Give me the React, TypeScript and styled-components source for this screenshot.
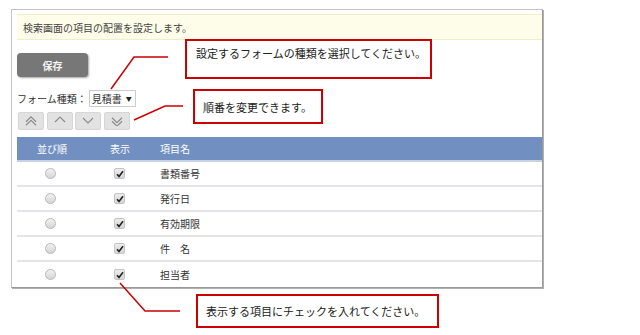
import React from 'react'
import styled, { createGlobalStyle } from 'styled-components'

const GlobalStyle = createGlobalStyle`
  html, body {
    margin: 0;
    padding: 0;
    background: #ffffff;
  }
  body {
    font-family: "Noto Sans CJK JP", "Noto Sans", sans-serif;
    color: #333333;
  }
`

const rows = [
  { name: '書類番号' },
  { name: '発行日' },
  { name: '有効期限' },
  { name: '件\u3000名' },
  { name: '担当者' },
]

const Page = styled.div`
  position: relative;
  width: 640px;
  height: 335px;
  padding: 9px 0 0 11px;
  box-sizing: border-box;
  overflow: hidden;
`

const Frame = styled.div`
  width: 532px;
  box-sizing: border-box;
  border: 1px solid #c4c4c4;
  border-right-color: #9a9a9a;
  border-bottom-color: #9a9a9a;
  box-shadow: 1px 1px 0 #b0b0b0;
  padding: 4px 0 0 5px;
  display: flex;
  flex-direction: column;
  align-items: flex-start;
`

const Notice = styled.div`
  align-self: stretch;
  height: 26px;
  box-sizing: border-box;
  background: #fefde9;
  border-top: 1px solid #f2eecb;
  border-bottom: 1px solid #f2eecb;
  padding-left: 6px;
  display: flex;
  align-items: center;
  font-size: 10px;
  color: #444;
`

const SaveButton = styled.div`
  margin-top: 13px;
  width: 71px;
  height: 24px;
  border-radius: 4px;
  background: #777777;
  box-shadow: 1px 1px 2px rgba(0, 0, 0, 0.35);
  color: #f4f4f4;
  font-size: 10px;
  font-weight: bold;
  display: flex;
  align-items: center;
  justify-content: center;
`

const FormRow = styled.div`
  margin-top: 13px;
  height: 17px;
  display: flex;
  align-items: center;
  font-size: 10px;
`

const Select = styled.div`
  margin-left: 2px;
  width: 47px;
  height: 17px;
  box-sizing: border-box;
  border: 1px solid #cccccc;
  background: #fff;
  display: flex;
  align-items: center;
  padding-left: 2px;
  gap: 4px;
  font-size: 10px;
`

const Caret = styled.span`
  font-size: 6px;
  color: #222;
`

const OrderBar = styled.div`
  margin-top: 5px;
  margin-left: 1px;
  display: flex;
  gap: 2.5px;
`

const OrderButton = styled.div`
  width: 26px;
  height: 18px;
  box-sizing: border-box;
  border-radius: 2px;
  background: #e2e2e2;
  border: 1px solid #d6d6d6;
  display: flex;
  align-items: center;
  justify-content: center;
`

const Table = styled.div`
  margin-top: 7px;
  align-self: stretch;
  display: flex;
  flex-direction: column;
`

const HeadRow = styled.div`
  display: grid;
  grid-template-columns: 70px 66px 1fr;
  height: 25px;
  box-sizing: border-box;
  background: #7190c1;
  border-bottom: 2px solid #c9d2e3;
  color: #ffffff;
  font-size: 10px;
  align-items: center;
`

const BodyRow = styled.div<{ $last?: boolean }>`
  display: grid;
  grid-template-columns: 70px 66px 1fr;
  height: 25px;
  box-sizing: border-box;
  border-bottom: ${(p) => (p.$last ? 'none' : '2px solid #e4e4ec')};
  font-size: 10px;
  align-items: center;
`

const Cell = styled.div<{ $center?: boolean }>`
  display: flex;
  justify-content: ${(p) => (p.$center ? 'center' : 'flex-start')};
  padding-left: ${(p) => (p.$center ? '0' : '7px')};
`

const Radio = styled.span`
  width: 11px;
  height: 11px;
  margin-right: 4px;
  border-radius: 50%;
  box-sizing: border-box;
  border: 1px solid #b8b8b8;
  background: linear-gradient(#f2f2f2, #d4d4d4);
`

const Check = styled.span`
  width: 11px;
  height: 11px;
  margin-right: 1px;
  border-radius: 2px;
  box-sizing: border-box;
  border: 1px solid #c4c4c4;
  background: linear-gradient(#ececec, #d6d6d6);
  display: flex;
  align-items: center;
  justify-content: center;
`

const Callout = styled.div<{ $x: number; $y: number; $w: number; $h: number; $top?: boolean }>`
  position: absolute;
  left: ${(p) => p.$x}px;
  top: ${(p) => p.$y}px;
  width: ${(p) => p.$w}px;
  height: ${(p) => p.$h}px;
  box-sizing: border-box;
  border: 2px solid #cc0000;
  background: #ffffff;
  padding: ${(p) => (p.$top ? '5px 0 0 9px' : '0 0 0 8px')};
  display: flex;
  align-items: ${(p) => (p.$top ? 'flex-start' : 'center')};
  font-size: 11px;
  line-height: 14px;
  color: #222;
  white-space: nowrap;
`

const Leaders = styled.svg`
  position: absolute;
  left: 0;
  top: 0;
  pointer-events: none;
`

const Chevrons = ({ dir, count }: { dir: 'up' | 'down'; count: number }) => {
  const offs = count === 2 ? [0, 3.5] : [1.75]
  return (
    <svg width="12" height="10" viewBox="0 0 12 10">
      {offs.map((o) => {
        const y1 = dir === 'up' ? 6 + o - 1.75 : 2 + o - 1.75
        const y2 = dir === 'up' ? 1 + o - 1.75 : 7 + o - 1.75
        const base = count === 2 ? 1.5 : 0
        return (
          <polyline
            key={o}
            points={`1,${y1 + base} 6,${y2 + base} 11,${y1 + base}`}
            fill="none"
            stroke="#8a8a8a"
            strokeWidth="1.1"
          />
        )
      })}
    </svg>
  )
}

const App = () => {
  return (
    <Page>
      <GlobalStyle />
      <Frame>
        <Notice>検索画面の項目の配置を設定します。</Notice>
        <SaveButton>保存</SaveButton>
        <FormRow>
          フォーム種類：
          <Select>
            見積書<Caret>▼</Caret>
          </Select>
        </FormRow>
        <OrderBar>
          <OrderButton><Chevrons dir="up" count={2} /></OrderButton>
          <OrderButton><Chevrons dir="up" count={1} /></OrderButton>
          <OrderButton><Chevrons dir="down" count={1} /></OrderButton>
          <OrderButton><Chevrons dir="down" count={2} /></OrderButton>
        </OrderBar>
        <Table>
          <HeadRow>
            <Cell $center>並び順</Cell>
            <Cell $center>表示</Cell>
            <Cell>項目名</Cell>
          </HeadRow>
          {rows.map((r, i) => (
            <BodyRow key={r.name} $last={i === rows.length - 1}>
              <Cell $center><Radio /></Cell>
              <Cell $center>
                <Check>
                  <svg width="8" height="8" viewBox="0 0 8 8">
                    <path d="M1 4.2 L3 6.4 L7 1.2" fill="none" stroke="#222" strokeWidth="1.6" />
                  </svg>
                </Check>
              </Cell>
              <Cell>{r.name}</Cell>
            </BodyRow>
          ))}
        </Table>
      </Frame>

      <Callout $x={185} $y={39} $w={247} $h={40} $top>
        設定するフォームの種類を選択してください。
      </Callout>
      <Callout $x={193} $y={89} $w={130} $h={35}>
        順番を変更できます。
      </Callout>
      <Callout $x={196} $y={294} $w={243} $h={34}>
        表示する項目にチェックを入れてください。
      </Callout>

      <Leaders width="640" height="335">
        <polyline points="111,89 134,57 168,57" fill="none" stroke="#cc0000" strokeWidth="1.5" />
        <polyline points="134,120 165,106 183,106" fill="none" stroke="#cc0000" strokeWidth="1.5" />
        <polyline points="120,283 145,311 180,311" fill="none" stroke="#cc0000" strokeWidth="1.5" />
      </Leaders>
    </Page>
  )
}

export default App
